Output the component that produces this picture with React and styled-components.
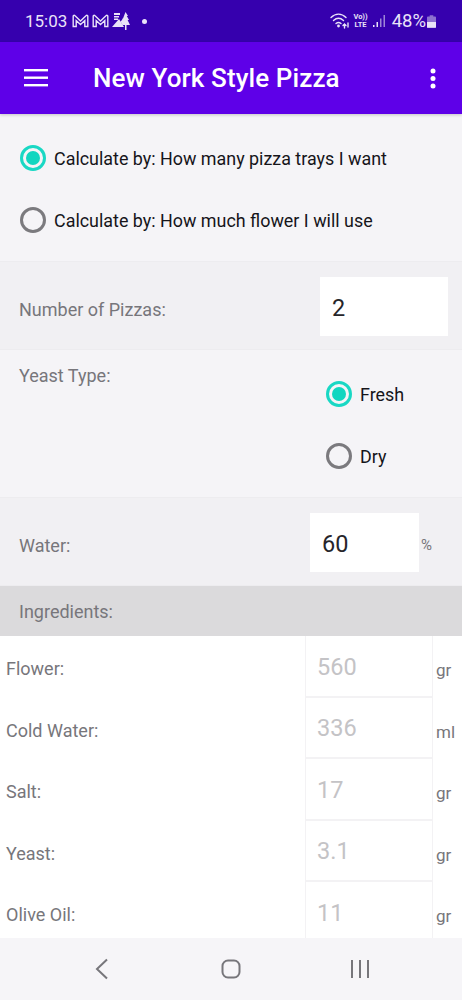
import React from "react";
import styled, { createGlobalStyle } from "styled-components";

const GlobalStyle = createGlobalStyle`
  html, body {
    margin: 0;
    padding: 0;
    background: #fff;
    font-family: Roboto, "Liberation Sans", sans-serif;
  }
`;

const Phone = styled.div`
  width: 462px;
  height: 1000px;
  display: flex;
  flex-direction: column;
  overflow: hidden;
`;

const StatusBar = styled.div`
  height: 42px;
  flex: none;
  display: flex;
  align-items: center;
  justify-content: space-between;
  padding: 0 26px 0 25px;
  box-sizing: border-box;
  background-color: #3600ae;
  color: #e9e2f8;
`;

const StatusGroup = styled.div`
  display: flex;
  align-items: center;
`;

const Clock = styled.span`
  font-size: 17px;
  margin-right: 5px;
`;

const Dot = styled.span`
  width: 5px;
  height: 5px;
  margin-left: 11px;
  border-radius: 50%;
  background-color: #e9e2f8;
`;

const Lte = styled.span`
  display: flex;
  flex-direction: column;
  align-items: center;
  margin: 0 5px 0 3px;
  font-size: 7.5px;
  font-weight: 700;
  line-height: 8px;
`;

const Percent = styled.span`
  font-size: 18.5px;
  margin-left: 6px;
`;

const Toolbar = styled.header`
  height: 72px;
  flex: none;
  display: flex;
  align-items: center;
  box-sizing: border-box;
  padding: 0 26px 0 24px;
  background-color: #5e00e8;
  box-shadow: 0 1px 3px rgba(0, 0, 0, 0.2);
  position: relative;
`;

const Title = styled.h1`
  flex: 1;
  margin: 0 0 0 45px;
  color: #fff;
  font-size: 26px;
  font-weight: 500;
  letter-spacing: 0.1px;
`;

const Section = styled.section`
  height: ${(p) => p.$height}px;
  flex: none;
  box-sizing: border-box;
  background-color: ${(p) => (p.$dim ? "#f1f0f3" : "#f5f4f7")};
  border-bottom: 1px solid #edecef;
  display: flex;
  ${(p) => p.$center && "align-items: center;"}
`;

const RadioColumn = styled.div`
  display: flex;
  flex-direction: column;
  gap: 36px;
  padding: 31px 0 0 20px;
  ${(p) => p.$side && "margin-left: auto; width: 136px; padding-left: 0; box-sizing: border-box;"}
`;

const RadioRow = styled.label`
  display: flex;
  align-items: center;
  height: 26px;
  color: #16151a;
  font-size: 17.9px;
`;

const RadioMark = styled.span`
  width: 26px;
  height: 26px;
  flex: none;
  box-sizing: border-box;
  margin-right: 8px;
  border-radius: 50%;
  border: 3px solid ${(p) => (p.$on ? "#19d8c4" : "#7b7a7e")};
  display: flex;
  align-items: center;
  justify-content: center;
  &::after {
    content: "";
    width: 14px;
    height: 14px;
    border-radius: 50%;
    background-color: ${(p) => (p.$on ? "#10d6c0" : "transparent")};
  }
`;

const FieldLabel = styled.span`
  color: #77767b;
  font-size: 18px;
  margin: 7px 0 0 19px;
`;

const TopLabel = styled(FieldLabel)`
  margin-top: 15px;
`;

const NumberBox = styled.div`
  width: ${(p) => p.$width}px;
  height: 59px;
  margin: 1px ${(p) => p.$right}px 0 auto;
  box-sizing: border-box;
  padding: 3px 0 0 12px;
  display: flex;
  align-items: center;
  background-color: #fff;
  color: #26252a;
  font-size: 23.5px;
`;

const Suffix = styled.span`
  color: #77767b;
  font-size: 15px;
  margin: 7px 30px 0 2px;
`;

const IngredientsHead = styled.div`
  height: 50px;
  flex: none;
  display: flex;
  align-items: center;
  padding-left: 19px;
  background-color: #dbdadc;
  color: #77767b;
  font-size: 18px;
`;

const List = styled.div`
  flex: 1;
  min-height: 0;
  overflow: hidden;
  background-color: #fff;
`;

const Row = styled.div`
  height: 61.5px;
  display: flex;
  align-items: center;
  color: #77767b;
  font-size: 18px;
`;

const RowName = styled.span`
  flex: 1;
  margin: 4px 0 0 6px;
`;

const RowValue = styled.div`
  width: 128px;
  height: 100%;
  box-sizing: border-box;
  padding: 2px 0 0 11px;
  display: flex;
  align-items: center;
  border: 1px solid #f3f2f4;
  border-width: 0 1px 2.5px 1px;
  color: #c4c3c6;
  font-size: 23.5px;
`;

const RowUnit = styled.span`
  width: 29px;
  padding: 7px 0 0 3px;
  box-sizing: border-box;
  font-size: 17px;
`;

const NavBar = styled.nav`
  height: 62px;
  flex: none;
  display: flex;
  align-items: center;
  justify-content: space-around;
  padding: 0 37px;
  background-color: #f6f5f8;
  position: relative;
`;

const NavButton = styled.div`
  width: 60px;
  display: flex;
  justify-content: center;
`;

const rows = [
  ["Flower:", "560", "gr"],
  ["Cold Water:", "336", "ml"],
  ["Salt:", "17", "gr"],
  ["Yeast:", "3.1", "gr"],
  ["Olive Oil:", "11", "gr"],
];

function MailIcon() {
  return (
    <svg width="17" height="14" viewBox="0 0 17 14" fill="none" stroke="#e9e2f8" strokeWidth="1.4" style={{ marginRight: 3 }}>
      <path d="M1.2 12.5V2.2c0-.8 1-1.2 1.6-.6L8.5 7l5.7-5.4c.6-.6 1.6-.2 1.6.6v10.3h-3V6.5L8.5 10.5 4.2 6.5v6z" />
    </svg>
  );
}

function TreeIcon() {
  return (
    <svg width="19" height="19" viewBox="0 0 19 19" fill="#e9e2f8">
      <path d="M2 1h6v2H2zM2 4h5v1.5H2zM2 6.5h4V8H2z" />
      <path d="M7 7l5 8H0z" />
      <path d="M13.5 0l2.5 4h-1.2l2.2 4h-1.4l2.4 5h-3.5v5h-1.5v-5h-2.500l-2-3.500 1.500-1.500.5-1.500h.5z" />
    </svg>
  );
}

function WifiIcon() {
  return (
    <svg width="20" height="18" viewBox="0 0 20 18" fill="none" stroke="#e9e2f8" strokeWidth="1.4" strokeLinecap="round">
      <path d="M1 5.5C5.5 1 11.5 1 16 5.5" />
      <path d="M3.5 8.5C6.8 5.5 10.2 5.5 13.5 8.5" />
      <path d="M6 11.5c1.8-1.5 3.2-1.5 5 0" />
      <circle cx="8.5" cy="14" r="0.7" fill="#e9e2f8" />
      <path d="M14.5 16v-4M13 13.5l1.5-1.5 1.5 1.5M18 11v4" />
    </svg>
  );
}

function SignalIcon() {
  return (
    <svg width="13" height="14" viewBox="0 0 13 14" fill="#9d86d6">
      <rect x="0" y="11" width="1.5" height="2" fill="#e9e2f8" />
      <rect x="3.5" y="8" width="1.5" height="5" fill="#e9e2f8" />
      <rect x="7" y="4.5" width="1.5" height="8.5" />
      <rect x="10.5" y="1" width="1.5" height="12" />
    </svg>
  );
}

function BatteryIcon() {
  return (
    <svg width="9" height="13" viewBox="0 0 10 14" style={{ marginLeft: 1 }}>
      <path d="M3 0h4v1.5h2a1 1 0 0 1 1 1V13a1 1 0 0 1-1 1H1a1 1 0 0 1-1-1V2.5a1 1 0 0 1 1-1h2z" fill="#8d70d0" />
      <path d="M0 7.5h10V13a1 1 0 0 1-1 1H1a1 1 0 0 1-1-1z" fill="#e9e2f8" />
    </svg>
  );
}

function MenuIcon() {
  return (
    <svg width="24" height="18" viewBox="0 0 24 18" fill="#fff">
      <rect y="0" width="24" height="2.4" />
      <rect y="7.5" width="24" height="2.4" />
      <rect y="15" width="24" height="2.4" />
    </svg>
  );
}

function MoreIcon() {
  return (
    <svg width="6" height="21" viewBox="0 0 6 21" fill="#fff">
      <circle cx="3" cy="3" r="2.5" />
      <circle cx="3" cy="10.5" r="2.5" />
      <circle cx="3" cy="18" r="2.5" />
    </svg>
  );
}

function App() {
  return (
    <Phone>
      <GlobalStyle />
      <StatusBar>
        <StatusGroup>
          <Clock>15:03</Clock>
          <MailIcon />
          <MailIcon />
          <TreeIcon />
          <Dot />
        </StatusGroup>
        <StatusGroup>
          <WifiIcon />
          <Lte>
            <span>Vo))</span>
            <span>LTE</span>
          </Lte>
          <SignalIcon />
          <Percent>48%</Percent>
          <BatteryIcon />
        </StatusGroup>
      </StatusBar>

      <Toolbar>
        <MenuIcon />
        <Title>New York Style Pizza</Title>
        <MoreIcon />
      </Toolbar>

      <Section $height={148}>
        <RadioColumn>
          <RadioRow>
            <RadioMark $on />
            Calculate by: How many pizza trays I want
          </RadioRow>
          <RadioRow>
            <RadioMark />
            Calculate by: How much flower I will use
          </RadioRow>
        </RadioColumn>
      </Section>

      <Section $height={88} $center $dim>
        <FieldLabel>Number of Pizzas:</FieldLabel>
        <NumberBox $width={128} $right={14}>2</NumberBox>
      </Section>

      <Section $height={148}>
        <TopLabel>Yeast Type:</TopLabel>
        <RadioColumn $side>
          <RadioRow>
            <RadioMark $on />
            Fresh
          </RadioRow>
          <RadioRow>
            <RadioMark />
            Dry
          </RadioRow>
        </RadioColumn>
      </Section>

      <Section $height={88} $center $dim>
        <FieldLabel>Water:</FieldLabel>
        <NumberBox $width={109} $right={0}>60</NumberBox>
        <Suffix>%</Suffix>
      </Section>

      <IngredientsHead>Ingredients:</IngredientsHead>

      <List>
        {rows.map(([name, value, unit]) => (
          <Row key={name}>
            <RowName>{name}</RowName>
            <RowValue>{value}</RowValue>
            <RowUnit>{unit}</RowUnit>
          </Row>
        ))}
      </List>

      <NavBar>
        <NavButton>
          <svg width="14" height="22" viewBox="0 0 14 22" fill="none" stroke="#77767b" strokeWidth="2">
            <path d="M12 1.5L2 11l10 9.5" />
          </svg>
        </NavButton>
        <NavButton>
          <svg width="20" height="20" viewBox="0 0 20 20" fill="none" stroke="#77767b" strokeWidth="2">
            <rect x="1.5" y="1.5" width="17" height="17" rx="5.5" />
          </svg>
        </NavButton>
        <NavButton>
          <svg width="20" height="20" viewBox="0 0 20 20" fill="#77767b">
            <rect x="1" y="1" width="2" height="18" />
            <rect x="9" y="1" width="2" height="18" />
            <rect x="17" y="1" width="2" height="18" />
          </svg>
        </NavButton>
      </NavBar>
    </Phone>
  );
}

export default App;
